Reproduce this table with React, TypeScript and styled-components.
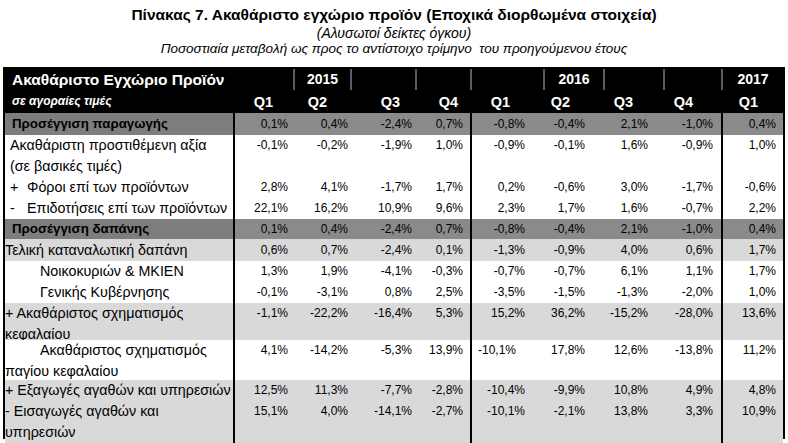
import React from 'react';
import styled, { createGlobalStyle } from 'styled-components';

type Tone = 'dark' | 'light' | 'white';

interface Col {
  w: number;
  pad: number;
  qPad: number;
  edge?: boolean;
  year?: string;
}

interface TableRow {
  lines: string[];
  tone: Tone;
  h: number;
  values: string[];
  bold?: boolean;
  inset?: number;
  indentFirst?: boolean;
  closed?: boolean;
  leftAt?: number;
}

const COLS: Col[] = [
  { w: 60, pad: 5, qPad: 20, edge: true },
  { w: 57, pad: 2, qPad: 23, year: '2015' },
  { w: 65, pad: 3, qPad: 15 },
  { w: 55, pad: 7, qPad: 12 },
  { w: 73, pad: 18, qPad: 33, edge: true },
  { w: 60, pad: 18, qPad: 33, year: '2016' },
  { w: 60, pad: 15, qPad: 30 },
  { w: 58, pad: 8, qPad: 28 },
  { w: 62, pad: 7, qPad: 25, edge: true, year: '2017' },
];

const GRID = `228px ${COLS.map((c) => `${c.w}px`).join(' ')}`;

const ROWS: TableRow[] = [
  {
    lines: ['Προσέγγιση παραγωγής'],
    tone: 'dark',
    h: 22,
    bold: true,
    inset: 7,
    values: ['0,1%', '0,4%', '-2,4%', '0,7%', '-0,8%', '-0,4%', '2,1%', '-1,0%', '0,4%'],
  },
  {
    lines: ['Ακαθάριστη προστιθέμενη αξία', '(σε βασικές τιμές)'],
    tone: 'white',
    h: 42,
    inset: 5,
    values: ['-0,1%', '-0,2%', '-1,9%', '1,0%', '-0,9%', '-0,1%', '1,6%', '-0,9%', '1,0%'],
  },
  {
    lines: ['+|Φόροι επί των προϊόντων'],
    tone: 'white',
    h: 21,
    inset: 5,
    values: ['2,8%', '4,1%', '-1,7%', '1,7%', '0,2%', '-0,6%', '3,0%', '-1,7%', '-0,6%'],
  },
  {
    lines: ['-|Επιδοτήσεις επί των προϊόντων'],
    tone: 'white',
    h: 21,
    inset: 5,
    closed: true,
    values: ['22,1%', '16,2%', '10,9%', '9,6%', '2,3%', '1,7%', '1,6%', '-0,7%', '2,2%'],
  },
  {
    lines: ['Προσέγγιση δαπάνης'],
    tone: 'dark',
    h: 20,
    bold: true,
    inset: 7,
    values: ['0,1%', '0,4%', '-2,4%', '0,7%', '-0,8%', '-0,4%', '2,1%', '-1,0%', '0,4%'],
  },
  {
    lines: ['Τελική καταναλωτική δαπάνη'],
    tone: 'light',
    h: 22,
    values: ['0,6%', '0,7%', '-2,4%', '0,1%', '-1,3%', '-0,9%', '4,0%', '0,6%', '1,7%'],
  },
  {
    lines: ['Νοικοκυριών & ΜΚΙΕΝ'],
    tone: 'white',
    h: 21,
    inset: 35,
    values: ['1,3%', '1,9%', '-4,1%', '-0,3%', '-0,7%', '-0,7%', '6,1%', '1,1%', '1,7%'],
  },
  {
    lines: ['Γενικής Κυβέρνησης'],
    tone: 'white',
    h: 21,
    inset: 35,
    values: ['-0,1%', '-3,1%', '0,8%', '2,5%', '-3,5%', '-1,5%', '-1,3%', '-2,0%', '1,0%'],
  },
  {
    lines: ['+ Ακαθάριστος σχηματισμός', 'κεφαλαίου'],
    tone: 'light',
    h: 37,
    values: ['-1,1%', '-22,2%', '-16,4%', '5,3%', '15,2%', '36,2%', '-15,2%', '-28,0%', '13,6%'],
  },
  {
    lines: ['Ακαθάριστος σχηματισμός', 'παγίου κεφαλαίου'],
    tone: 'white',
    h: 40,
    indentFirst: true,
    leftAt: 4,
    values: ['4,1%', '-14,2%', '-5,3%', '13,9%', '-10,1%', '17,8%', '12,6%', '-13,8%', '11,2%'],
  },
  {
    lines: ['+ Εξαγωγές αγαθών και υπηρεσιών'],
    tone: 'light',
    h: 21,
    values: ['12,5%', '11,3%', '-7,7%', '-2,8%', '-10,4%', '-9,9%', '10,8%', '4,9%', '4,8%'],
  },
  {
    lines: ['-  Εισαγωγές αγαθών και', 'υπηρεσιών'],
    tone: 'light',
    h: 36,
    values: ['15,1%', '4,0%', '-14,1%', '-2,7%', '-10,1%', '-2,1%', '13,8%', '3,3%', '10,9%'],
  },
];

const labelBg = (t: Tone) => (t === 'dark' ? '#7d7d7d' : t === 'light' ? '#d9d9d9' : '#ffffff');
const valueBg = (t: Tone) => (t === 'dark' ? '#8a8a8a' : t === 'light' ? '#d9d9d9' : '#ffffff');

const GlobalStyle = createGlobalStyle`
  html, body {
    margin: 0;
    padding: 0;
    background: #ffffff;
  }
  body {
    font-family: "Liberation Sans", Arial, sans-serif;
    color: #000000;
  }
`;

const Page = styled.div`
  width: 788px;
  height: 443px;
  overflow: hidden;
  background: #ffffff;
`;

const Heading = styled.div`
  padding-top: 5px;
  text-align: center;
`;

const Title = styled.div`
  font-weight: bold;
  font-size: 15.5px;
  line-height: 20px;
`;

const Sub = styled.div<{ $size: number }>`
  font-style: italic;
  font-size: ${({ $size }) => $size}px;
  line-height: 16px;
`;

const Table = styled.div`
  margin: 10px 0 0 3px;
  width: 782px;
  border: 2px solid #000000;
  box-sizing: border-box;
`;

const Row = styled.div<{ $h: number }>`
  display: grid;
  grid-template-columns: ${GRID};
  height: ${({ $h }) => $h}px;
`;

const HeadCell = styled.div<{ $span?: number; $divider?: boolean }>`
  grid-column: span ${({ $span }) => $span || 1};
  background: #000000;
  color: #ffffff;
  font-weight: bold;
  font-size: 14px;
  line-height: 21px;
  text-align: center;
  box-sizing: border-box;
  border-left: ${({ $divider }) => ($divider ? '2px solid #5c5c5c' : 'none')};
`;

const HeadTitle = styled(HeadCell)`
  text-align: left;
  padding-left: 7px;
  font-size: 15.5px;
`;

const HeadNote = styled.div`
  background: #000000;
  color: #ffffff;
  font-weight: bold;
  font-style: italic;
  font-size: 12px;
  line-height: 23px;
  padding-left: 7px;
`;

const QCell = styled.div<{ $pad: number }>`
  background: #000000;
  color: #ffffff;
  font-weight: bold;
  font-size: 14.5px;
  line-height: 25px;
  text-align: right;
  padding-right: ${({ $pad }) => $pad}px;
`;

const Label = styled.div<{ $tone: Tone; $bold?: boolean; $inset: number; $closed?: boolean; $lh: number }>`
  background: ${({ $tone }) => labelBg($tone)};
  font-weight: ${({ $bold }) => ($bold ? 'bold' : 'normal')};
  font-size: ${({ $bold }) => ($bold ? 13.3 : 14.3)}px;
  line-height: ${({ $lh }) => $lh}px;
  padding-left: ${({ $inset }) => $inset}px;
  white-space: nowrap;
  box-sizing: border-box;
  border-bottom: ${({ $closed }) => ($closed ? '2px solid #000000' : 'none')};
`;

const Line = styled.div<{ $indent?: boolean }>`
  padding-left: ${({ $indent }) => ($indent ? 35 : 0)}px;
`;

const Sign = styled.span`
  display: inline-block;
  width: 17px;
`;

const Value = styled.div<{ $tone: Tone; $pad: number; $edge?: boolean; $left?: number; $lh: number }>`
  background: ${({ $tone }) => valueBg($tone)};
  font-size: 12px;
  line-height: ${({ $lh }) => $lh}px;
  text-align: ${({ $left }) => ($left !== undefined ? 'left' : 'right')};
  padding-right: ${({ $pad, $left }) => ($left !== undefined ? 0 : $pad)}px;
  padding-left: ${({ $left }) => $left || 0}px;
  box-sizing: border-box;
  border-left: ${({ $edge }) => ($edge ? '2px solid #000000' : 'none')};
`;

const renderLine = (text: string, i: number, indent: boolean) => {
  if (text.includes('|')) {
    const [sign, rest] = text.split('|');
    return (
      <Line key={i}>
        <Sign>{sign}</Sign>
        {rest}
      </Line>
    );
  }
  return (
    <Line key={i} $indent={indent}>
      {text}
    </Line>
  );
};

export default function App() {
  return (
    <Page>
      <GlobalStyle />
      <Heading>
        <Title>Πίνακας 7. Ακαθάριστο εγχώριο προϊόν (Εποχικά διορθωμένα στοιχεία)</Title>
        <Sub $size={14}>(Αλυσωτοί δείκτες όγκου)</Sub>
        <Sub $size={13.5}>
          Ποσοστιαία μεταβολή ως προς το αντίστοιχο τρίμηνο&nbsp; του προηγούμενου έτους
        </Sub>
      </Heading>
      <Table>
        <Row $h={21}>
          <HeadTitle $span={2}>Ακαθάριστο Εγχώριο Προϊόν</HeadTitle>
          {COLS.slice(1).map((c, i) => (
            <HeadCell key={i} $divider>
              {c.year}
            </HeadCell>
          ))}
        </Row>
        <Row $h={23}>
          <HeadNote>σε αγοραίες τιμές</HeadNote>
          {COLS.map((c, i) => (
            <QCell key={i} $pad={c.qPad}>
              {`Q${i < 4 ? i + 1 : i < 8 ? i - 3 : 1}`}
            </QCell>
          ))}
        </Row>
        {ROWS.map((r, ri) => {
          const lh = r.lines.length === 1 ? r.h : 21;
          return (
            <Row key={ri} $h={r.h}>
              <Label
                $tone={r.tone}
                $bold={r.bold}
                $inset={r.inset ?? 0}
                $closed={r.closed}
                $lh={lh}
              >
                {r.lines.map((l, li) => renderLine(l, li, !!r.indentFirst && li === 0))}
              </Label>
              {r.values.map((v, vi) => (
                <Value
                  key={vi}
                  $tone={r.tone}
                  $pad={COLS[vi].pad}
                  $edge={COLS[vi].edge}
                  $left={vi === r.leftAt ? 6 : undefined}
                  $lh={lh}
                >
                  {v}
                </Value>
              ))}
            </Row>
          );
        })}
      </Table>
    </Page>
  );
}
